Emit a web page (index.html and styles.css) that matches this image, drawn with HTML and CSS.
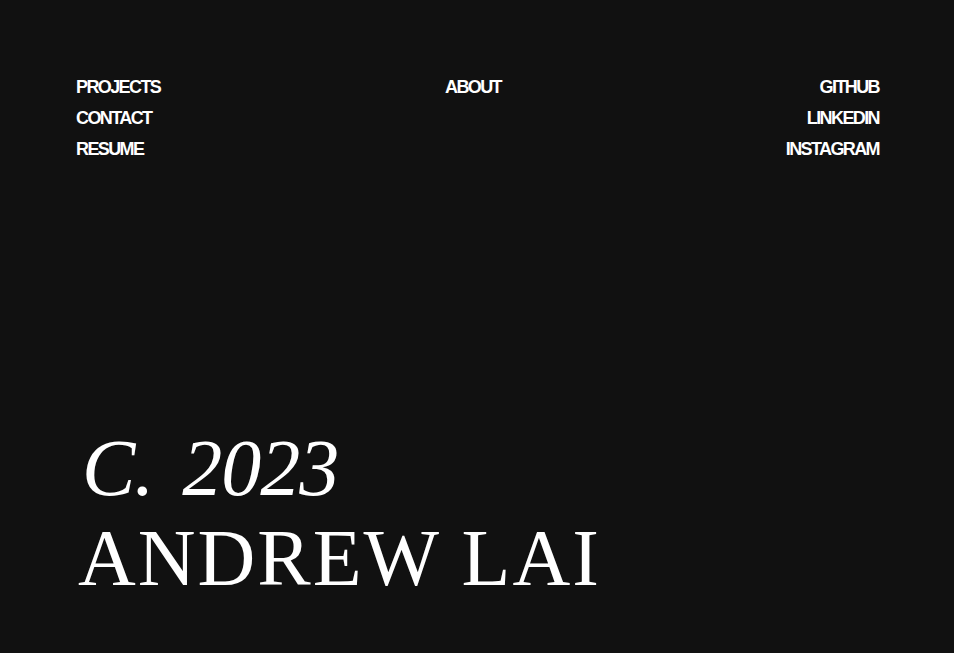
FILE: index.html
```html
<!DOCTYPE html>
<html lang="en">
<head>
<meta charset="utf-8">
<title>Andrew Lai</title>
<link rel="stylesheet" href="styles.css">
</head>
<body>
<div class="page">
  <header class="nav">
    <ul class="nav-col">
      <li><a href="#">PROJECTS</a></li>
      <li><a href="#">CONTACT</a></li>
      <li><a href="#">RESUME</a></li>
    </ul>
    <ul class="nav-col">
      <li><a href="#">ABOUT</a></li>
    </ul>
    <ul class="nav-col nav-right">
      <li><a href="#">GITHUB</a></li>
      <li><a href="#">LINKEDIN</a></li>
      <li><a href="#">INSTAGRAM</a></li>
    </ul>
  </header>
  <main class="hero">
    <p class="hero-year">C. 2023</p>
    <h1 class="hero-name">ANDREW LAI</h1>
  </main>
</div>
</body>
</html>
```
FILE: styles.css
```css
html, body {
  margin: 0;
  padding: 0;
  background: #111111;
}
body {
  color: #ffffff;
}
.page {
  min-height: 100vh;
  box-sizing: border-box;
  display: flex;
  flex-direction: column;
  padding: 72px 75px 50px 76px;
}
.nav {
  display: flex;
  justify-content: space-between;
  align-items: flex-start;
}
.nav-col {
  list-style: none;
  margin: 0;
  padding: 0;
  display: flex;
  flex-direction: column;
}
.nav-right {
  align-items: flex-end;
}
.nav-col a {
  color: #ffffff;
  text-decoration: none;
  font-family: "Liberation Sans", Arial, sans-serif;
  font-weight: 700;
  font-size: 18px;
  line-height: 31px;
  letter-spacing: -1.6px;
}
.hero {
  margin-top: auto;
  font-family: "Liberation Serif", "Times New Roman", serif;
  font-weight: 400;
  font-size: 80px;
  line-height: 90px;
}
.hero-year {
  margin: 0;
  font: inherit;
  font-style: italic;
  letter-spacing: -1px;
  word-spacing: 10px;
  padding-left: 6px;
}
.hero-name {
  margin: 0;
  font: inherit;
  letter-spacing: 2px;
  padding-left: 2px;
}
```
